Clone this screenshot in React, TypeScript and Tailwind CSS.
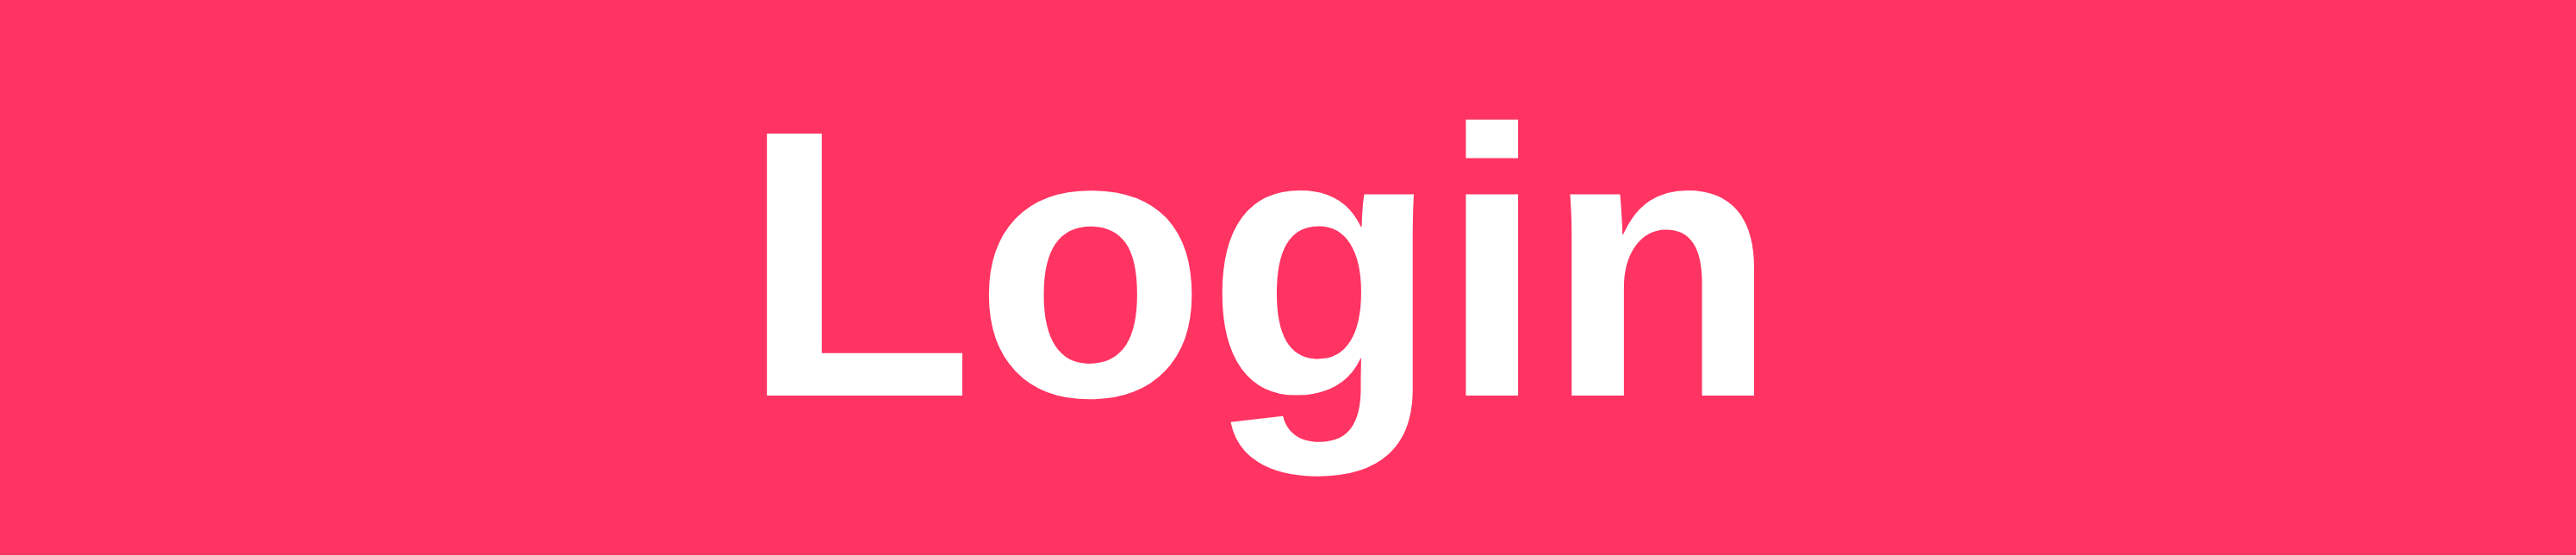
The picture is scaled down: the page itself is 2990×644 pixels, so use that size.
import React from 'react';

export default function App() {
  return (
    <div className="w-[2990px] h-[644px] bg-[#ff3462] flex items-center justify-center pr-[66px] pb-[32px]">
      <button
        type="button"
        className="text-white font-bold text-[442px] leading-none tracking-normal"
        style={{ fontFamily: '"Liberation Sans", Arial, sans-serif' }}
      >
        Login
      </button>
    </div>
  );
}
